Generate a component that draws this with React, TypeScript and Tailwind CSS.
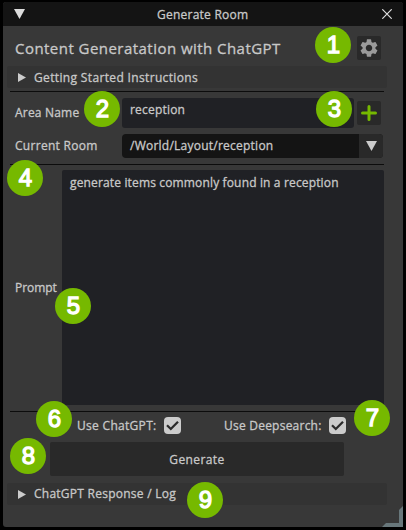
import React from "react";

const Badge = ({ n, className }: { n: number; className: string }) => (
  <div
    className={`absolute flex h-9 w-9 items-center justify-center rounded-full bg-[#76b900] text-[24px] leading-none font-normal text-white [-webkit-text-stroke:1.3px_white] [font-family:'Liberation_Sans',sans-serif] ${className}`}
  >
    <span className="-mt-px">{n}</span>
  </div>
);

const Check = () => (
  <svg width="17" height="17" viewBox="0 0 17 17">
    <rect width="17" height="17" rx="4" fill="#cccccc" />
    <path d="M3 8.3 L6.8 12 L14 4.8" fill="none" stroke="#2b2b2b" strokeWidth="2.3" />
  </svg>
);

const Gear = () => (
  <svg width="18" height="18" viewBox="2 2 20 20" fill="#9a9a9a">
    <path d="M19.14 12.94c.04-.3.06-.61.06-.94 0-.32-.02-.64-.07-.94l2.03-1.58a.49.49 0 0 0 .12-.61l-1.92-3.32a.488.488 0 0 0-.59-.22l-2.39.96c-.5-.38-1.03-.7-1.62-.94l-.36-2.54a.484.484 0 0 0-.48-.41h-3.84c-.24 0-.43.17-.47.41l-.36 2.54c-.59.24-1.13.57-1.62.94l-2.39-.96c-.22-.08-.47 0-.59.22L2.74 8.87c-.12.21-.08.47.12.61l2.03 1.58c-.05.3-.09.63-.09.94s.02.64.07.94l-2.03 1.58a.49.49 0 0 0-.12.61l1.92 3.32c.12.22.37.29.59.22l2.39-.96c.5.38 1.03.7 1.62.94l.36 2.54c.05.24.24.41.48.41h3.84c.24 0 .44-.17.47-.41l.36-2.54c.59-.24 1.13-.56 1.62-.94l2.39.96c.22.08.47 0 .59-.22l1.92-3.32c.12-.22.07-.47-.12-.61l-2.01-1.58zM12 15.6c-1.98 0-3.6-1.62-3.6-3.6s1.62-3.6 3.6-3.6 3.6 1.62 3.6 3.6-1.62 3.6-3.6 3.6z" />
  </svg>
);

const Section = ({ title, spacing }: { title: string; spacing: string }) => (
  <div className="ml-1 flex h-[22px] w-[380px] items-center rounded-[2px] bg-[#333333] pl-[11px]">
    <svg width="8" height="9" viewBox="0 0 8 9" fill="#cccccc">
      <path d="M0 0L8 4.5L0 9Z" />
    </svg>
    <span className={`ml-2 ${spacing}`}>{title}</span>
  </div>
);

const Rule = () => <div className="ml-[7px] h-px w-[374px] bg-[#0c0c0c]" />;

export default function App() {
  return (
    <div className="relative h-[530px] w-[406px] overflow-hidden bg-black pt-[2px] pl-[3px] text-[12px] leading-4 font-normal whitespace-nowrap text-[#c8c8c8] [-webkit-text-stroke:0.3px_#c8c8c8] [font-family:'Open_Sans','Noto_Sans',sans-serif]">
      <div className="flex h-[525px] w-[400px] flex-col overflow-hidden rounded-[3px] bg-[#383838]">
        <header className="flex h-6 shrink-0 items-center bg-[#141414]">
          <svg className="ml-[11px]" width="11" height="10" viewBox="0 0 11 10" fill="#dddddd">
            <path d="M0 0H11L5.5 10Z" />
          </svg>
          <span className="ml-[132px] w-[92px] pt-px tracking-[0.24px]">Generate Room</span>
          <svg className="ml-[133px]" width="10" height="10" viewBox="0 0 10 10" stroke="#dddddd" strokeWidth="1.2">
            <path d="M0.3 0.3L9.7 9.7M9.7 0.3L0.3 9.7" />
          </svg>
        </header>

        <div className="flex h-10 shrink-0 items-center pl-3">
          <h1 className="w-[342px] pt-1 text-[15px] leading-5 tracking-[0.46px]">Content Generatation with ChatGPT</h1>
          <button className="mt-[3px] flex h-6 w-6 items-center justify-center rounded-[2px] bg-[#292929]">
            <Gear />
          </button>
        </div>

        <Section title="Getting Started Instructions" spacing="tracking-[0.35px] pt-px" />
        <div className="mt-[3px]"><Rule /></div>

        <div className="mt-[6px] flex h-[30px] shrink-0 pl-3">
          <span className="w-[107px] pt-[7px] tracking-[0.2px]">Area Name</span>
          <div className="w-[232px] rounded-[3px] bg-[#202125] pt-1 pl-2 tracking-[0.2px]">reception</div>
          <button className="mt-[3px] ml-[3px] flex h-6 w-6 items-center justify-center rounded-[2px] bg-[#292929]">
            <svg width="16" height="16" viewBox="0 0 16 16" stroke="#76b900" strokeWidth="3" strokeLinecap="round">
              <path d="M8 1.5V14.5M1.5 8H14.5" />
            </svg>
          </button>
        </div>

        <div className="mt-[6px] flex h-6 shrink-0 items-center pl-3">
          <span className="w-[107px] tracking-[0.3px]">Current Room</span>
          <div className="flex h-6 w-[261px] items-center overflow-hidden rounded-[4px] bg-[#141414] pl-2">
            <span className="w-[229px] tracking-[0.24px]">/World/Layout/reception</span>
            <div className="flex h-6 w-6 items-center justify-center bg-[#292929]">
              <svg width="11" height="10" viewBox="0 0 11 10" fill="#cccccc">
                <path d="M0 0H11L5.5 10Z" />
              </svg>
            </div>
          </div>
        </div>
        <div className="mt-[6px]"><Rule /></div>

        <div className="mt-[5px] flex h-[235px] shrink-0 items-center pl-3">
          <span className="w-[47px] tracking-[-0.05px]">Prompt</span>
          <div className="h-full w-[322px] rounded-[2px] bg-[#202125] pt-[5px] pl-2 tracking-[0.15px]">
            generate items commonly found in a reception
          </div>
        </div>
        <div className="mt-[6px]"><Rule /></div>

        <div className="mt-[5px] flex h-[17px] shrink-0 items-center pl-[74px]">
          <span className="w-[87px] pt-px tracking-[0.3px]">Use ChatGPT:</span>
          <Check />
          <span className="ml-[43px] w-[105px] pt-px tracking-[0.23px]">Use Deepsearch:</span>
          <Check />
        </div>

        <button className="mt-[8px] ml-[47px] flex h-[34px] w-[294px] shrink-0 items-center justify-center rounded-[2px] bg-[#292929] pt-[2px] tracking-[0.4px]">
          Generate
        </button>
        <div className="mt-[7px]">
          <Section title="ChatGPT Response / Log" spacing="tracking-[0.25px]" />
        </div>
      </div>

      <svg className="absolute right-[3px] bottom-[3px]" width="21" height="21" viewBox="0 0 21 21" fill="#68777b">
        <path d="M21 0V21H0L4 17H17V4Z" />
      </svg>

      <Badge n={1} className="top-[27.4px] left-[315.4px]" />
      <Badge n={2} className="top-[91.4px] left-[84.4px]" />
      <Badge n={3} className="top-[91.4px] left-[316.4px]" />
      <Badge n={4} className="top-[160.4px] left-[7.4px]" />
      <Badge n={5} className="top-[288.4px] left-[55.4px]" />
      <Badge n={6} className="top-[401.4px] left-[36.4px]" />
      <Badge n={7} className="top-[400.4px] left-[354.4px]" />
      <Badge n={8} className="top-[438.4px] left-[10.4px]" />
      <Badge n={9} className="top-[482.4px] left-[187.4px]" />
    </div>
  );
}
